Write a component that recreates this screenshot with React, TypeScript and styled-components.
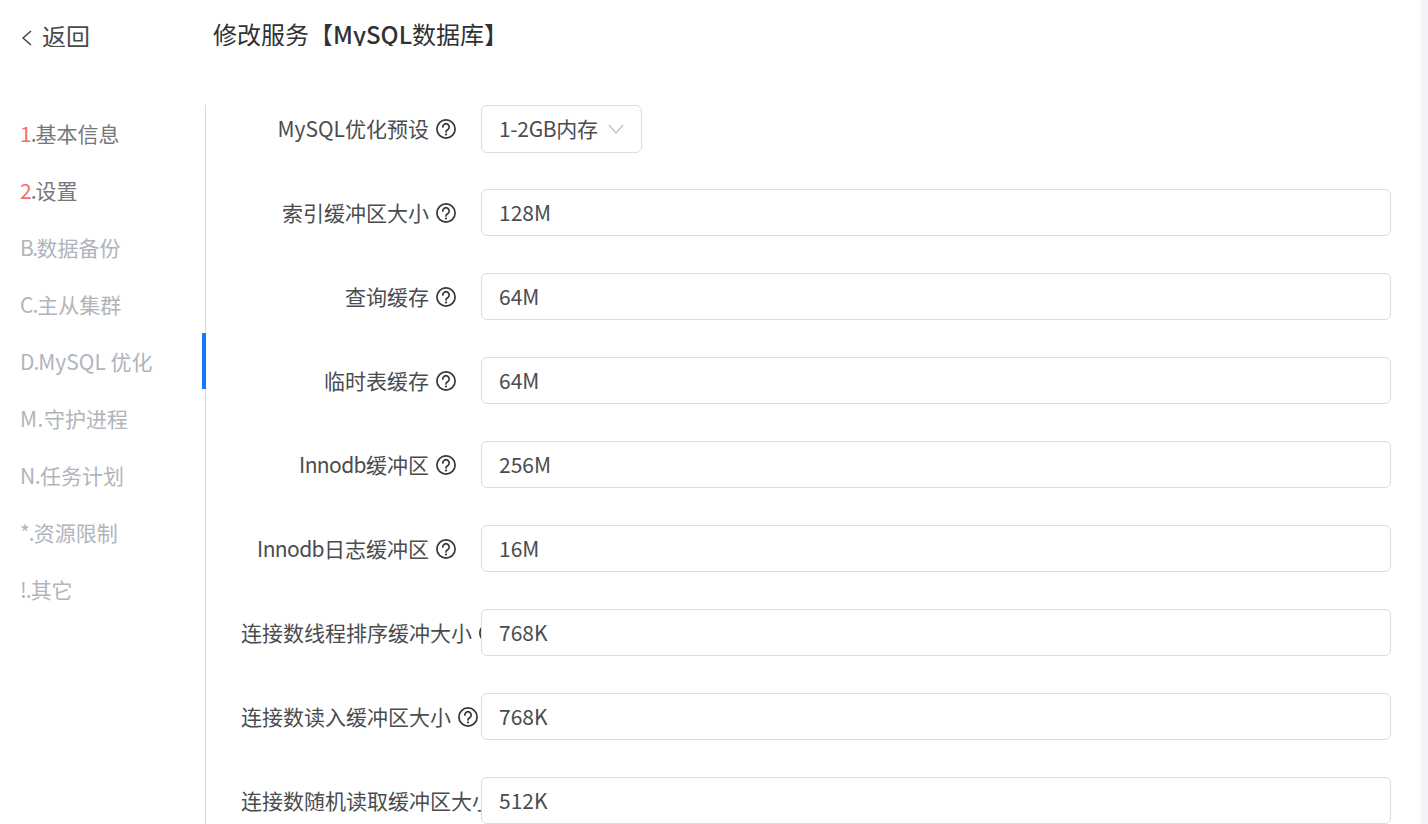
import React from "react";
import styled, { createGlobalStyle } from "styled-components";

const Global = createGlobalStyle`
  html, body { margin: 0; padding: 0; height: 824px; overflow: hidden; background: #f3f4f8; }
  #root { height: 824px; }
  * { box-sizing: border-box; }
`;

const FONT = `"Noto Sans CJK SC", "Noto Sans", sans-serif`;

const Page = styled.div`
  width: 1421px;
  height: 824px;
  overflow: hidden;
  background: #fff;
  font-family: ${FONT};
  display: flex;
  flex-direction: column;
`;

const Header = styled.header`
  flex: 0 0 105px;
  display: flex;
  align-items: flex-start;
  padding-top: 21px;
`;

const Back = styled.div`
  width: 213px;
  height: 26px;
  padding-left: 21px;
  display: flex;
  align-items: flex-start;
  gap: 10px;
  font-size: 24px;
  line-height: 30px;
  color: #4a4a4a;
  overflow: hidden;
  svg {
    margin-top: 9px;
  }
`;

const Title = styled.h1`
  margin: 0;
  height: 25px;
  font-size: 24px;
  font-weight: 400;
  line-height: 26px;
  color: #2f3133;
  overflow: hidden;
`;

const TitleLatin = styled.span`
  font-weight: 500;
`;

const Body = styled.div`
  flex: 1;
  display: flex;
  min-height: 0;
`;

const Side = styled.nav`
  position: relative;
  flex: 0 0 206px;
  border-right: 1px solid #d9d9d9;
  padding: 1px 0 0 20px;
`;

const ActiveBar = styled.span`
  position: absolute;
  right: -1px;
  top: 228px;
  width: 4px;
  height: 56px;
  background: #1677ff;
`;

const NavItem = styled.div<{ $on?: boolean }>`
  height: 57px;
  padding-bottom: 4px;
  display: flex;
  align-items: center;
  font-size: 21px;
  white-space: nowrap;
  color: ${(p) => (p.$on ? "#74777c" : "#b0b4bb")};
`;

const Prefix = styled.span<{ $track: number }>`
  letter-spacing: ${(p) => p.$track}px;
`;

const Num = styled.span`
  color: #f56c6c;
`;

const Form = styled.main`
  flex: 1;
  padding-left: 35px;
  min-width: 0;
`;

const Row = styled.div`
  height: 84px;
  display: flex;
  align-items: flex-start;
`;

const Label = styled.label`
  flex: 0 0 240px;
  height: 47px;
  padding-right: 24px;
  overflow: hidden;
  white-space: nowrap;
  text-align: right;
  font-size: 21px;
  line-height: 47px;
  color: #4a4c50;
`;

const TightLatin = styled.span`
  letter-spacing: -0.6px;
`;

const Help = styled.svg`
  display: inline-block;
  width: 20px;
  height: 20px;
  margin: 0 1px 0 7px;
  vertical-align: -2px;
`;

const Select = styled.div`
  width: 161px;
  height: 48px;
  border: 1px solid #dcdcdc;
  border-radius: 6px;
  padding: 0 17px 2px;
  display: flex;
  align-items: center;
  justify-content: space-between;
  font-size: 21px;
  letter-spacing: -0.3px;
  color: #4a4c50;
  white-space: nowrap;
  svg {
    margin-top: 2px;
  }
`;

const Input = styled.div`
  width: 910px;
  height: 47px;
  border: 1px solid #dcdcdc;
  border-radius: 6px;
  padding: 0 17px 2px;
  display: flex;
  align-items: center;
  font-size: 21px;
  color: #4a4c50;
`;

const Stripe = styled.div`
  position: fixed;
  top: 0;
  right: 0;
  width: 7px;
  height: 824px;
  background: #f3f4f8;
`;

const HelpIcon = () => (
  <Help viewBox="0 0 20 20" fill="none" stroke="#333539" strokeWidth="1.7">
    <circle cx="10" cy="10" r="9.1" />
    <path d="M6.8 7.9a3.2 3.2 0 1 1 4.8 2.8c-1 .6-1.6 1.1-1.6 2.2" strokeLinecap="round" />
    <circle cx="10" cy="15.5" r="1.1" fill="#333539" stroke="none" />
  </Help>
);

const nav: { p: string; t: string; red?: boolean; track: number }[] = [
  { p: "1.", t: "基本信息", red: true, track: -1 },
  { p: "2.", t: "设置", red: true, track: -1 },
  { p: "B.", t: "数据备份", track: -1.6 },
  { p: "C.", t: "主从集群", track: -1 },
  { p: "D.", t: "MySQL 优化", track: -1 },
  { p: "M.", t: "守护进程", track: 0.5 },
  { p: "N.", t: "任务计划", track: -0.5 },
  { p: "*.", t: "资源限制", track: -1 },
  { p: "!.", t: "其它", track: -1 },
];

const rows: { latin?: string; l: string; v: string }[] = [
  { l: "索引缓冲区大小", v: "128M" },
  { l: "查询缓存", v: "64M" },
  { l: "临时表缓存", v: "64M" },
  { latin: "Innodb", l: "缓冲区", v: "256M" },
  { latin: "Innodb", l: "日志缓冲区", v: "16M" },
  { l: "连接数线程排序缓冲大小", v: "768K" },
  { l: "连接数读入缓冲区大小", v: "768K" },
  { l: "连接数随机读取缓冲区大小", v: "512K" },
];

export default function App() {
  return (
    <>
      <Global />
      <Page>
        <Header>
          <Back>
            <svg width="11" height="16" viewBox="0 0 11 16" fill="none" stroke="#3a3c40" strokeWidth="1.4">
              <path d="M10 1 2 8l8 7" />
            </svg>
            返回
          </Back>
          <Title>
            修改服务【<TitleLatin>MySQL</TitleLatin>数据库】
          </Title>
        </Header>
        <Body>
          <Side>
            {nav.map((i) => (
              <NavItem key={i.p} $on={i.red}>
                <Prefix $track={i.track}>
                  {i.red ? (
                    <>
                      <Num>{i.p[0]}</Num>.
                    </>
                  ) : (
                    i.p
                  )}
                </Prefix>
                {i.t}
              </NavItem>
            ))}
            <ActiveBar />
          </Side>
          <Form>
            <Row>
              <Label>
                MySQL优化预设
                <HelpIcon />
              </Label>
              <Select>
                1-2GB内存
                <svg width="16" height="10" viewBox="0 0 16 10" fill="none" stroke="#c0c2c6" strokeWidth="1.3">
                  <path d="M1 1l7 8 7-8" />
                </svg>
              </Select>
            </Row>
            {rows.map((r) => (
              <Row key={r.l}>
                <Label>
                  {r.latin && <TightLatin>{r.latin}</TightLatin>}
                  {r.l}
                  <HelpIcon />
                </Label>
                <Input>{r.v}</Input>
              </Row>
            ))}
          </Form>
        </Body>
      </Page>
      <Stripe />
    </>
  );
}
